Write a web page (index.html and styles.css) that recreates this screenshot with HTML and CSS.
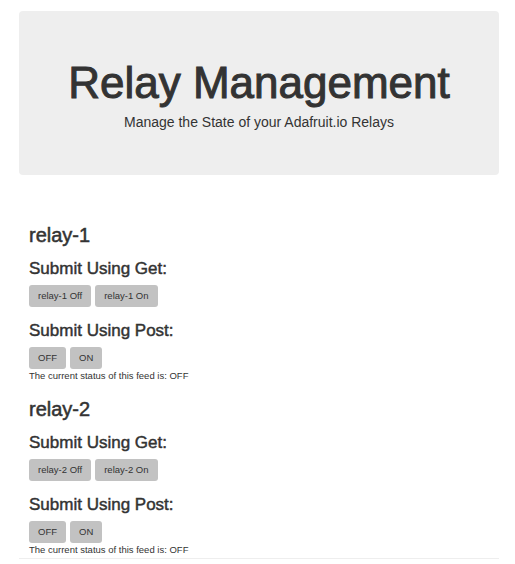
FILE: index.html
```html
<!DOCTYPE html>
<html lang="en">
<head>
  <meta charset="UTF-8">
  <title>Relay Management</title>
  <link rel="stylesheet" href="styles.css">
</head>
<body>
  <div class="container">
    <div class="jumbotron">
      <h1>Relay Management</h1>
      <p>Manage the State of your Adafruit.io Relays</p>
    </div>

    <div class="relay">
      <h2>relay-1</h2>
      <h3>Submit Using Get:</h3>
      <div class="buttons">
        <button type="button">relay-1 Off</button>
        <button type="button">relay-1 On</button>
      </div>
      <h3>Submit Using Post:</h3>
      <form class="buttons" method="post">
        <button type="button">OFF</button>
        <button type="button">ON</button>
      </form>
      <p class="status">The current status of this feed is: OFF</p>
    </div>

    <div class="relay">
      <h2>relay-2</h2>
      <h3>Submit Using Get:</h3>
      <div class="buttons">
        <button type="button">relay-2 Off</button>
        <button type="button">relay-2 On</button>
      </div>
      <h3>Submit Using Post:</h3>
      <form class="buttons" method="post">
        <button type="button">OFF</button>
        <button type="button">ON</button>
      </form>
      <p class="status">The current status of this feed is: OFF</p>
    </div>

    <div class="footer"></div>
  </div>
</body>
</html>
```

FILE: styles.css
```css
body {
  margin: 0;
  font-family: "Liberation Sans", Arial, sans-serif;
  color: #333;
  background: #fff;
}
.container {
  padding: 11px 16px 0 19px;
}
.jumbotron {
  background: #eee;
  border-radius: 4px;
  padding: 48px 10px 43px;
  text-align: center;
}
.jumbotron h1 {
  margin: 0;
  font-size: 44px;
  line-height: 48px;
  font-weight: normal;
  -webkit-text-stroke: 1px #333;
}
.jumbotron p {
  margin: 5px 0 0;
  font-size: 14px;
  line-height: 20px;
}
.relay {
  padding: 0 10px;
}
.relay h2 {
  margin: 49px 0 0;
  font-size: 20px;
  line-height: 22px;
  font-weight: normal;
  -webkit-text-stroke: 0.5px #333;
}
.relay + .relay h2 {
  margin-top: 16px;
}
.relay h3 {
  margin: 13px 0 0;
  font-size: 17px;
  line-height: 20px;
  font-weight: normal;
  -webkit-text-stroke: 0.45px #333;
}
.relay h3 + .buttons + h3 {
  margin-top: 14px;
}
.buttons {
  margin: 6px 0 0;
  display: flex;
  gap: 4px;
}
.buttons button {
  font-family: inherit;
  font-size: 9.5px;
  line-height: 12px;
  color: #333;
  background: #c2c2c2;
  border: 0;
  border-radius: 3px;
  padding: 5px 9px;
}
.status {
  margin: 0;
  font-size: 9.5px;
  line-height: 13px;
}
.footer {
  margin-top: 2px;
  border-top: 1px solid #eee;
}
```
